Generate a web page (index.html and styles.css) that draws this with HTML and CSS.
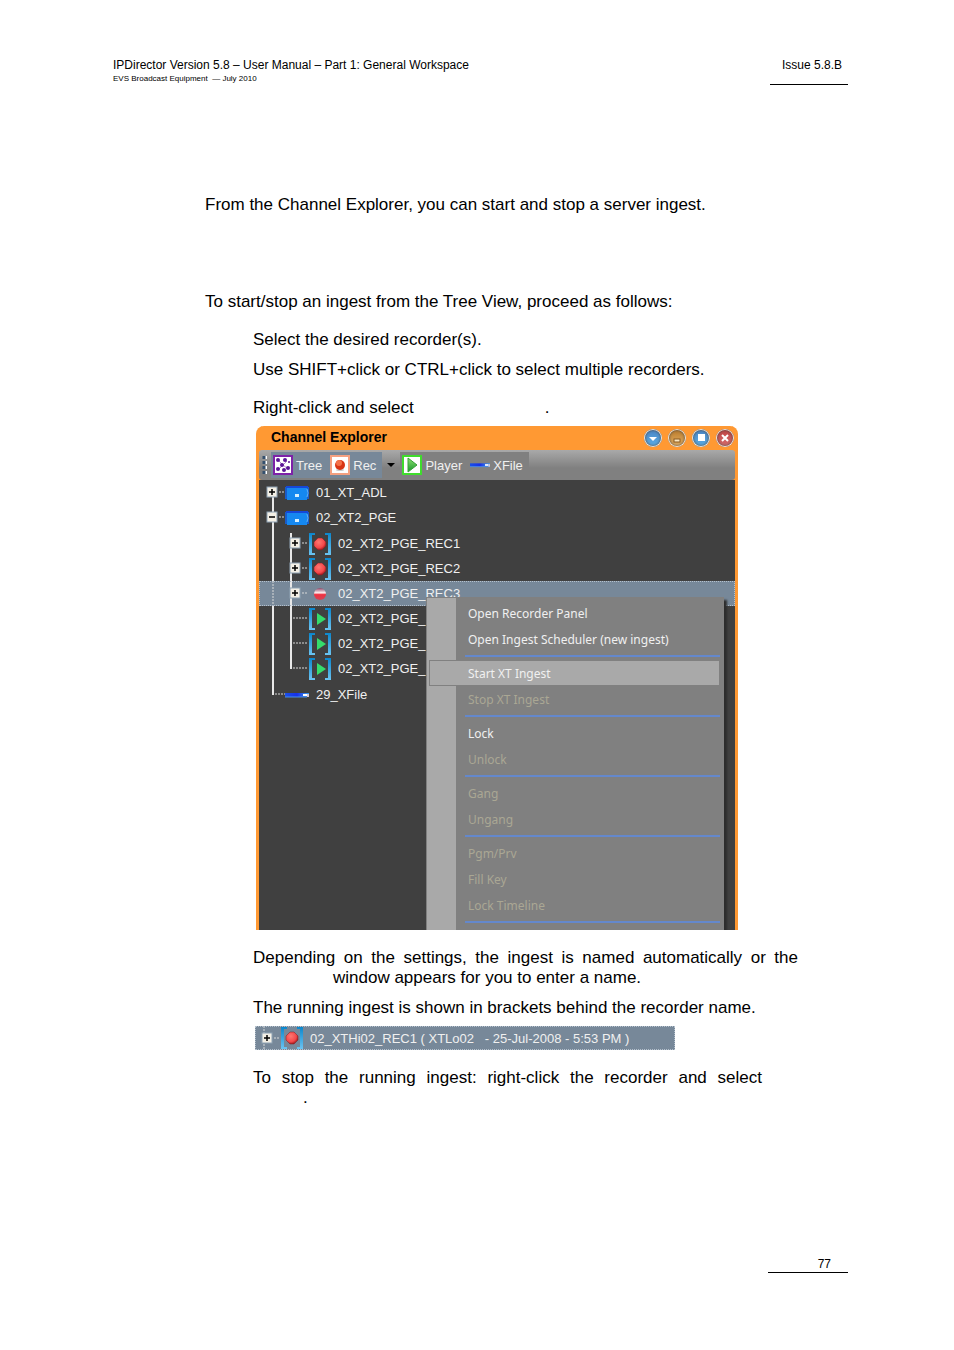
FILE: index.html
```
<!DOCTYPE html>
<html lang="en">
<head>
<meta charset="UTF-8">
<meta name="viewport" content="width=device-width, initial-scale=1.0">
<title>IPDirector Version 5.8 - User Manual</title>
<link rel="stylesheet" href="styles.css">
</head>
<body>

<!-- Shared icons -->
<svg class="sprite" width="0" height="0">
    <defs>
        <radialGradient id="redBall" cx="40%" cy="35%" r="65%">
            <stop offset="0" stop-color="#ff7770"/>
            <stop offset="0.7" stop-color="#f4484a"/>
            <stop offset="1" stop-color="#a81c20"/>
        </radialGradient>
        <linearGradient id="halfBall" x1="0" y1="0" x2="0" y2="1">
            <stop offset="0" stop-color="#8d4668"/>
            <stop offset="0.4" stop-color="#fff0f0"/>
            <stop offset="0.55" stop-color="#f03040"/>
            <stop offset="1" stop-color="#d04858"/>
        </linearGradient>
        <linearGradient id="bracketBlue" x1="0" y1="0" x2="0" y2="1">
            <stop offset="0" stop-color="#0b86cc"/>
            <stop offset="1" stop-color="#6cc4f2"/>
        </linearGradient>
        <linearGradient id="greenPlay" x1="0" y1="0" x2="0" y2="1">
            <stop offset="0" stop-color="#8be070"/>
            <stop offset="1" stop-color="#16962a"/>
        </linearGradient>
        <linearGradient id="xfileBlue">
            <stop offset="0" stop-color="#1a50e8"/>
            <stop offset="0.5" stop-color="#1730e8"/>
            <stop offset="1" stop-color="#3da0f0"/>
        </linearGradient>
        <symbol id="plus" viewBox="0 0 12 12">
            <rect x="1" y="1" width="10" height="10" fill="#f4f0e6" stroke="#8fa3b5"/>
            <path d="M3 6h6M6 3v6" stroke="#000" stroke-width="1.5"/>
        </symbol>
        <symbol id="minus" viewBox="0 0 12 12">
            <rect x="1" y="1" width="10" height="10" fill="#f4f0e6" stroke="#8fa3b5"/>
            <path d="M3 6h6" stroke="#000" stroke-width="1.5"/>
        </symbol>
        <symbol id="brackets" viewBox="0 0 22 22">
            <path d="M6 0H0v22h6v-2H3V2h3zM16 0h6v22h-6v-2h3V2h-3z" fill="url(#bracketBlue)"/>
        </symbol>
        <symbol id="rec" viewBox="0 0 22 22">
            <use href="#brackets"/>
            <path d="M9 5h4l4 4v4l-4 4H9l-4-4V9z" fill="url(#redBall)" stroke="#7a2024" stroke-width="0.5"/>
        </symbol>
        <symbol id="recIdle" viewBox="0 0 22 22">
            <circle cx="11" cy="11" r="6" fill="url(#halfBall)"/>
        </symbol>
        <symbol id="play" viewBox="0 0 22 22">
            <use href="#brackets"/>
            <path d="M8 5l9 6-9 6z" fill="#35dc6b"/>
        </symbol>
        <symbol id="server" viewBox="0 0 24 14">
            <rect x="0" y="1" width="24" height="12" fill="#1a5cc8"/>
            <rect x="1" y="0" width="22" height="2" fill="#1548d8"/>
            <rect x="2" y="2" width="20" height="12" fill="#1588f0"/>
            <path d="M22 3l1 4-1 4" stroke="#5fb4f8" fill="none"/>
            <rect x="10" y="8" width="4" height="3" fill="#d8f0ff"/>
        </symbol>
        <symbol id="xfile" viewBox="0 0 24 6">
            <rect x="0" y="1" width="24" height="4" fill="url(#xfileBlue)"/>
            <path d="M0 5h22" stroke="#4a90e8"/>
            <rect x="18" y="2" width="4" height="2" fill="#fff"/>
            <rect x="22" y="2" width="2" height="3" fill="#d8c8d8"/>
        </symbol>
    </defs>
</svg>

<header class="page-header">
    <div>
        <div class="doc-title">IPDirector Version 5.8 – User Manual – Part 1: General Workspace</div>
        <div class="doc-sub">EVS Broadcast Equipment &nbsp;— July 2010</div>
    </div>
    <div class="issue">Issue 5.8.B</div>
</header>

<main class="content">
    <p>From the Channel Explorer, you can start and stop a server ingest.</p>
    <p class="section-start">To start/stop an ingest from the Tree View, proceed as follows:</p>

    <ol class="steps">
        <li>
            <p>Select the desired recorder(s).</p>
            <p>Use SHIFT+click or CTRL+click to select multiple recorders.</p>
        </li>
        <li>
            <p>Right-click and select<span class="blank blank-command"></span>.</p>

            <section class="window">
                <div class="title-bar">
                    <h2>Channel Explorer</h2>
                    <button class="win-btn blue" aria-label="Roll down"><svg width="18" height="18"><path d="M5 8h8l-4 4z" fill="#fff"/></svg></button>
                    <button class="win-btn amber" aria-label="Minimize"><svg width="18" height="18"><rect x="6" y="10" width="6" height="3" fill="#fbe6c0" stroke="#8a5a20"/></svg></button>
                    <button class="win-btn blue" aria-label="Maximize"><svg width="18" height="18"><rect x="6" y="5" width="7" height="7" fill="#fff"/></svg></button>
                    <button class="win-btn red" aria-label="Close"><svg width="18" height="18"><path d="M6 6l6 6M12 6l-6 6" stroke="#fff" stroke-width="2"/></svg></button>
                </div>

                <div class="toolbar">
                    <svg class="grip" width="6" height="20"><path d="M3 1v18" stroke="#fff" stroke-width="4" stroke-dasharray="3 2"/><path d="M2 1v18" stroke="#34506e" stroke-width="3" stroke-dasharray="3 2"/></svg>
                    <button class="tool active">
                        <svg width="20" height="20">
                            <rect x="1" y="1" width="18" height="18" fill="#fff" stroke="#7d22a8" stroke-width="2"/>
                            <path d="M6 6l4 4 4-4M10 10l-4 4M10 10l5 4" stroke="#b58ad0" fill="none"/>
                            <g fill="#5a1496"><circle cx="5" cy="5" r="2"/><circle cx="12" cy="5" r="2"/><circle cx="16" cy="7" r="1"/><circle cx="9" cy="10" r="2"/><circle cx="5" cy="14" r="2"/><circle cx="11" cy="15" r="2"/><circle cx="15" cy="13" r="2"/></g>
                        </svg>
                        Tree
                    </button>
                    <button class="tool active">
                        <svg width="20" height="20"><rect x="1" y="1" width="18" height="18" fill="#fff" stroke="#f4a080" stroke-width="2"/><ellipse cx="10" cy="15" rx="4" ry="1" fill="#ccc"/><circle cx="10" cy="10" r="5" fill="#d83414"/><circle cx="9" cy="8" r="3" fill="#f47048"/></svg>
                        Rec
                    </button>
                    <button class="drop" aria-label="Recorder list"><svg width="8" height="4"><path d="M0 0h8L4 4z" fill="#000"/></svg></button>
                    <button class="tool">
                        <svg width="20" height="20"><rect x="1" y="1" width="18" height="18" fill="#fff" stroke="#3fdc2c" stroke-width="2"/><path d="M6 3l9 7-9 7z" fill="url(#greenPlay)" stroke="#38a038"/></svg>
                        Player
                    </button>
                    <button class="tool">
                        <svg width="20" height="6"><use href="#xfile"/></svg>
                        XFile
                    </button>
                </div>

                <div class="tree">
                    <ul>
                        <li>
                            <div class="row">
                                <button class="guide" aria-label="Expand"><svg width="26" height="25"><path class="line" d="M14 12v13"/><path class="dots" d="M20 12h6"/><use href="#plus" x="7" y="6" width="12" height="12"/></svg></button>
                                <svg width="24" height="14"><use href="#server"/></svg>
                                <span>01_XT_ADL</span>
                            </div>
                        </li>
                        <li>
                            <div class="row">
                                <button class="guide" aria-label="Collapse"><svg width="26" height="25"><path class="line" d="M14 0v26"/><path class="dots" d="M20 12h6"/><use href="#minus" x="7" y="6" width="12" height="12"/></svg></button>
                                <svg width="24" height="14"><use href="#server"/></svg>
                                <span>02_XT2_PGE</span>
                            </div>
                            <ul class="children">
                                <li class="row">
                                    <button class="guide" aria-label="Expand"><svg width="50" height="25"><path class="line" d="M14 0v25M32 2v23"/><path class="dots" d="M43 12h6"/><use href="#plus" x="30" y="6" width="12" height="12"/></svg></button>
                                    <svg width="22" height="22"><use href="#rec"/></svg>
                                    <span>02_XT2_PGE_REC1</span>
                                </li>
                                <li class="row">
                                    <button class="guide" aria-label="Expand"><svg width="50" height="25"><path class="line" d="M14 0v25M32 0v25"/><path class="dots" d="M43 12h6"/><use href="#plus" x="30" y="6" width="12" height="12"/></svg></button>
                                    <svg width="22" height="22"><use href="#rec"/></svg>
                                    <span>02_XT2_PGE_REC2</span>
                                </li>
                                <li class="row selected">
                                    <button class="guide" aria-label="Expand"><svg width="50" height="25"><path class="dots" d="M14 0v25"/><path class="line" d="M32 0v25"/><path class="dots" d="M43 12h6"/><use href="#plus" x="30" y="6" width="12" height="12"/></svg></button>
                                    <svg width="22" height="22"><use href="#recIdle"/></svg>
                                    <span>02_XT2_PGE_REC3</span>
                                </li>
                                <li class="row">
                                    <svg class="guide" width="50" height="25"><path class="line" d="M14 0v25M32 0v25"/><path class="dots" d="M34 12h15"/></svg>
                                    <svg width="22" height="22"><use href="#play"/></svg>
                                    <span>02_XT2_PGE_</span>
                                </li>
                                <li class="row">
                                    <svg class="guide" width="50" height="25"><path class="line" d="M14 0v25M32 0v25"/><path class="dots" d="M34 12h15"/></svg>
                                    <svg width="22" height="22"><use href="#play"/></svg>
                                    <span>02_XT2_PGE_</span>
                                </li>
                                <li class="row">
                                    <svg class="guide" width="50" height="25"><path class="line" d="M14 0v26M32 0v13"/><path class="dots" d="M34 12h15"/></svg>
                                    <svg width="22" height="22"><use href="#play"/></svg>
                                    <span>02_XT2_PGE_</span>
                                </li>
                            </ul>
                        </li>
                        <li class="row">
                            <svg class="guide" width="26" height="25"><path class="line" d="M14 0v13"/><path class="dots" d="M16 12h10"/></svg>
                            <svg width="24" height="6"><use href="#xfile"/></svg>
                            <span>29_XFile</span>
                        </li>
                    </ul>

                    <!-- Recorder context menu -->
                    <div class="context-menu">
                        <button>Open Recorder Panel</button>
                        <button>Open Ingest Scheduler (new ingest)</button>
                        <hr>
                        <button class="hover">Start XT Ingest</button>
                        <button disabled>Stop XT Ingest</button>
                        <hr>
                        <button>Lock</button>
                        <button disabled>Unlock</button>
                        <hr>
                        <button disabled>Gang</button>
                        <button disabled>Ungang</button>
                        <hr>
                        <button disabled>Pgm/Prv</button>
                        <button disabled>Fill Key</button>
                        <button disabled>Lock Timeline</button>
                        <hr>
                    </div>
                </div>
            </section>

            <p class="after-window"><span class="full-line">Depending on the settings, the ingest is named automatically or the</span> <span class="blank blank-window"></span>window appears for you to enter a name.</p>
            <p>The running ingest is shown in brackets behind the recorder name.</p>

            <div class="running row selected">
                <button class="guide" aria-label="Expand"><svg width="26" height="24"><path class="dots" d="M9 0v24M19 12h6"/><use href="#plus" x="6" y="6" width="12" height="12"/></svg></button>
                <svg width="22" height="22"><use href="#rec"/></svg>
                <span>02_XTHi02_REC1 ( XTLo02 &nbsp; - 25-Jul-2008 - 5:53 PM )</span>
            </div>
        </li>
        <li>
            <p><span class="full-line short">To stop the running ingest: right-click the recorder and select</span> <span class="blank blank-stop"></span>.</p>
        </li>
    </ol>
</main>

<footer class="page-footer">77</footer>

</body>
</html>
```
FILE: styles.css
```
body {
    margin: 0;
    padding: 57px 106px 40px 113px;
    background: #fff;
    color: #000;
    font-family: "Liberation Sans", Arial, sans-serif;
}

p {
    margin: 0;
    font-size: 17px;
    line-height: 20px;
}

button {
    margin: 0;
    padding: 0;
    border: none;
    background: none;
    font: inherit;
    color: inherit;
}

svg {
    display: block;
    flex-shrink: 0;
}

.sprite {
    position: absolute;
}

/* Page header */
.page-header {
    display: flex;
    justify-content: space-between;
    line-height: 16px;
    font-size: 12px;
}

.doc-sub {
    font-size: 8px;
    line-height: 12px;
}

.issue {
    width: 72px;
    padding-right: 6px;
    border-bottom: 1px solid #000;
    text-align: right;
}

/* Text body */
.content {
    margin: 110px 50px 0 92px;
}

.section-start {
    margin-top: 77px;
}

.steps {
    margin: 0 0 0 48px;
    padding: 0;
    list-style: none;
}

.steps > li {
    margin-top: 18px;
}

.steps p + p {
    margin-top: 10px;
}

.steps .after-window {
    margin-top: 18px;
}

.full-line {
    display: block;
    text-align-last: justify;
}

.full-line.short {
    margin-right: 36px;
}

.blank {
    display: inline-block;
}

.blank-command {
    width: 131px;
}

.blank-window {
    width: 80px;
}

.blank-stop {
    width: 50px;
}

/* Channel Explorer window */
.window {
    max-width: 476px;
    margin: 8px 0 0 3px;
    border: 3px solid #ff9933;
    border-width: 0 3px;
    border-radius: 8px 8px 0 0;
    background: #ff9933;
    color: #f0f0f0;
    font-size: 13px;
}

.title-bar {
    display: flex;
    align-items: center;
    gap: 6px;
    height: 24px;
}

.title-bar h2 {
    flex: 1;
    margin: 0;
    padding: 0 0 2px 12px;
    color: #000;
    font-size: 14px;
}

.win-btn {
    width: 18px;
    height: 18px;
    border-radius: 50%;
    box-shadow: inset 0 0 0 1px #f4e4d4, inset 0 0 3px 1px #444;
}

.win-btn:last-child {
    margin-right: 1px;
}

.win-btn.blue {
    background: linear-gradient(#4a84c4, #5cb0e8);
}

.win-btn.amber {
    background: linear-gradient(#b87828, #e8b468);
}

.win-btn.red {
    background: linear-gradient(#c04040, #d87070);
}

.toolbar {
    display: flex;
    align-items: center;
    height: 30px;
    background: linear-gradient(#a9a9a9, #808080 60%);
    border-radius: 3px;
}

.grip {
    margin: 0 3px;
}

.tool {
    display: flex;
    align-items: center;
    gap: 3px;
    height: 26px;
    padding: 0 6px 0 2px;
    background: #808080;
}

.tool.active {
    background: #778899;
}

.drop {
    display: flex;
    align-items: center;
    justify-content: center;
    width: 18px;
    height: 26px;
}

/* Recorder tree */
.tree {
    position: relative;
    min-height: 450px;
    background: #404040;
}

.tree ul {
    margin: 0;
    padding: 0;
    list-style: none;
}

.tree .children {
    padding: 1px 0;
}

.row {
    display: flex;
    align-items: center;
    height: 25px;
    white-space: nowrap;
}

.row > span {
    margin-left: 7px;
}

.row.selected {
    background: #778899;
    outline: 1px dotted #b4c0cc;
    outline-offset: -1px;
}

.guide,
.guide svg {
    overflow: visible;
}

.line {
    stroke: #e8e8e8;
    stroke-width: 2;
}

.dots {
    stroke: #d8d8d8;
    stroke-width: 1;
    stroke-dasharray: 2 1;
}

/* Context menu */
.context-menu {
    position: absolute;
    top: 117px;
    right: 11px;
    bottom: 0;
    left: 167px;
    box-sizing: border-box;
    padding: 2px 3px 0 2px;
    border: 1px solid #808080;
    border-bottom: none;
    background: linear-gradient(to right, #a9a9a9 29px, #808080 29px);
    box-shadow: 3px 3px 2px #2c2c2c;
    font-family: "Noto Sans", sans-serif;
    font-size: 12px;
    clip-path: inset(0 -6px 0 0);
}

.context-menu button {
    display: block;
    box-sizing: border-box;
    width: 100%;
    height: 26px;
    padding-left: 39px;
    text-align: left;
}

.context-menu button.hover {
    padding-left: 38px;
    border: 1px solid #808080;
    background: #a9a9a9;
}

.context-menu button:disabled {
    color: #aaa794;
}

.context-menu hr {
    height: 2px;
    margin: 3px 0 3px 36px;
    border: none;
    background: #6488cc;
}

/* Running ingest strip */
.running {
    max-width: 420px;
    height: 24px;
    margin: 8px 0 0 2px;
    overflow: hidden;
    color: #f0f0f0;
    font-size: 13px;
}

/* Page footer */
.page-footer {
    width: 63px;
    margin: 148px 0 0 auto;
    padding-right: 17px;
    border-bottom: 1px solid #000;
    font-size: 12px;
    line-height: 16px;
    text-align: right;
}
```
